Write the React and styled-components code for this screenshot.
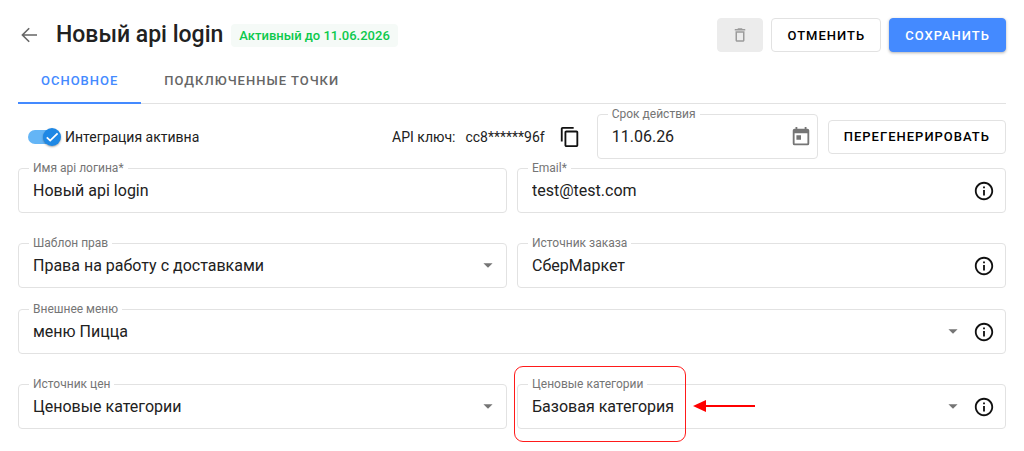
import React, { useState } from 'react'
import styled, { createGlobalStyle, css } from 'styled-components'
import {
  MdDeleteOutline,
  MdOutlineContentCopy,
  MdInfoOutline,
  MdArrowDropDown,
} from 'react-icons/md'

const GlobalStyle = createGlobalStyle`
  * {
    box-sizing: border-box;
  }
  body {
    margin: 0;
    background: #fff;
    color: #212121;
    font-family: Roboto, "Noto Sans", sans-serif;
    font-size: 14px;
  }
  button, input, select {
    font-family: inherit;
    color: inherit;
  }
`;

const Page = styled.div`
  padding: 18px 18px 22px;
`;

const Header = styled.header`
  display: flex;
  align-items: center;
  gap: 8px;
`;

const IconButton = styled.button`
  display: flex;
  flex: none;
  padding: 0;
  border: 0;
  background: none;
  color: ${(p) => p.$color || '#111'};
  cursor: pointer;
`;

const Title = styled.h1`
  margin: 0 0 0 8px;
  font-size: 23px;
  line-height: 28px;
  font-weight: 500;
  white-space: nowrap;
`;

const Status = styled.span`
  padding: 0 8px;
  border-radius: 4px;
  background: #f5faf7;
  color: #0cc94c;
  font-size: 13px;
  font-weight: 500;
  line-height: 23px;
  white-space: nowrap;
`;

const Actions = styled.div`
  display: flex;
  gap: 8px;
  margin-left: auto;
`;

const Button = styled.button`
  display: flex;
  align-items: center;
  justify-content: center;
  flex: none;
  height: 34px;
  padding: 0 15px;
  border: 1px solid #e2e2e2;
  border-radius: 4px;
  background: #fff;
  color: #000;
  font-size: 13px;
  font-weight: 500;
  letter-spacing: 1px;
  text-transform: uppercase;
  white-space: nowrap;
  cursor: pointer;

  ${(p) => p.$primary && css`
    border-color: #448aff;
    background: #448aff;
    color: #fff;
    box-shadow: 0 1px 3px rgba(0, 0, 0, 0.3);
  `}

  &:disabled {
    padding: 0 13px;
    border-color: #ececec;
    background: #ececec;
    color: #9b9b9b;
    cursor: default;
  }
`;

const Tabs = styled.nav`
  display: flex;
  border-bottom: 1px solid #e2e2e2;
`;

const Tab = styled.button`
  height: 52px;
  margin-bottom: -1px;
  padding: 6px 23px 0;
  border: 0;
  border-bottom: 2px solid ${(p) => (p.$active ? '#448aff' : 'transparent')};
  background: none;
  color: ${(p) => (p.$active ? '#448aff' : '#666')};
  font-size: 13px;
  font-weight: 500;
  letter-spacing: 1px;
  text-transform: uppercase;
  cursor: pointer;
`;

const Form = styled.form`
  padding-top: 10px;
`;

const Row = styled.div`
  display: flex;
  align-items: center;
  gap: 10px;
  margin-bottom: ${(p) => p.$space || 0}px;
`;

const SwitchLabel = styled.label`
  display: flex;
  align-items: center;
  gap: 4px;
  margin: 0 auto 0 10px;
  cursor: pointer;
`;

const SwitchTrack = styled.span`
  position: relative;
  display: flex;
  align-items: center;
  width: 33px;
  height: 18px;

  &::before {
    content: '';
    width: 30px;
    height: 14px;
    border-radius: 7px;
    background: ${(p) => (p.$on ? '#64b5f6' : '#bdbdbd')};
  }
`;

const SwitchInput = styled.input`
  position: absolute;
  inset: 0;
  width: 100%;
  height: 100%;
  margin: 0;
  opacity: 0;
  cursor: pointer;
`;

const SwitchThumb = styled.svg`
  position: absolute;
  top: 0;
  ${(p) => (p.$on ? 'right: 0;' : 'left: 0;')}
  border-radius: 50%;
  background: ${(p) => (p.$on ? '#1e88e5' : '#fafafa')};
  box-shadow: 0 1px 2px rgba(0, 0, 0, 0.35);
  pointer-events: none;
`;

const ApiKey = styled.div`
  display: flex;
  align-items: center;
  gap: 10px;
  margin-right: 6px;
  white-space: nowrap;

  button {
    margin-left: 4px;
  }
`;

const FieldBox = styled.div`
  position: relative;
  display: flex;
  align-items: center;
  flex: ${(p) => (p.$width ? `0 0 ${p.$width}px` : '1 1 50%')};
  min-width: 0;
  height: 45px;
  padding-right: ${(p) => p.$end || 10}px;
  border: 1px solid #e2e2e2;
  border-radius: 4px;
`;

// label sits over the top border of the outline
const FieldLabel = styled.label`
  position: absolute;
  top: -8px;
  left: 10px;
  padding: 0 4px;
  background: #fff;
  color: #757575;
  font-size: 12px;
  line-height: 14px;
  white-space: nowrap;
`;

const control = css`
  flex: 1;
  width: 100%;
  min-width: 0;
  height: 43px;
  padding: 0 14px 1px;
  border: 0;
  outline: 0;
  background: none;
  font-size: 16px;
`;

const Input = styled.input`
  ${control}
`;

const SelectWrap = styled.span`
  position: relative;
  display: flex;
  flex: 1;
  min-width: 0;

  svg {
    position: absolute;
    top: 10px;
    right: 0;
    color: #757575;
    pointer-events: none;
  }
`;

const Select = styled.select`
  ${control}
  appearance: none;
  cursor: pointer;
`;

const InfoGap = styled.span`
  width: 9px;
`;

const Highlight = styled.span`
  position: absolute;
  top: -19px;
  left: -4px;
  width: 172px;
  height: 76px;
  border: 1px solid #ff1a1a;
  border-radius: 9px;
  pointer-events: none;
`;

const Arrow = styled.svg`
  position: absolute;
  top: 15px;
  left: 175px;
  pointer-events: none;
`;

const BackIcon = () => (
  <svg width="22" height="22" viewBox="0 0 22 22" fill="none" stroke="currentColor" strokeWidth="1.6">
    <path d="M19 11H5M11.2 4.2 4.4 11l6.8 6.8" />
  </svg>
)

const CalendarIcon = () => (
  <svg width="22" height="22" viewBox="0 0 24 24" fill="currentColor">
    <path d="M19 3h-1V1h-2v2H8V1H6v2H5a2 2 0 0 0-2 2v14a2 2 0 0 0 2 2h14a2 2 0 0 0 2-2V5a2 2 0 0 0-2-2zm0 16H5V8h14v11zM7 10h5v5H7z" />
  </svg>
)

const InfoButton = () => (
  <IconButton type="button" aria-label="Информация">
    <MdInfoOutline size={22} />
  </IconButton>
)

const TextField = ({ id, label, value, info }) => (
  <FieldBox>
    <FieldLabel htmlFor={id}>{label}</FieldLabel>
    <Input id={id} type="text" defaultValue={value} />
    {info && <InfoButton />}
  </FieldBox>
)

const SelectField = ({ id, label, value, info, children }) => (
  <FieldBox $end={info ? 10 : 7}>
    <FieldLabel htmlFor={id}>{label}</FieldLabel>
    <SelectWrap>
      <Select id={id} defaultValue={value}>
        <option>{value}</option>
      </Select>
      <MdArrowDropDown size={22} />
    </SelectWrap>
    {info && (
      <>
        <InfoGap />
        <InfoButton />
      </>
    )}
    {children}
  </FieldBox>
)

const App = () => {
  const [active, setActive] = useState(true)
  const [tab, setTab] = useState('main')

  return (
    <Page>
      <GlobalStyle />
      <Header>
        <IconButton type="button" aria-label="Назад" $color="#666">
          <BackIcon />
        </IconButton>
        <Title>Новый api login</Title>
        <Status>Активный до 11.06.2026</Status>
        <Actions>
          <Button type="button" disabled aria-label="Удалить">
            <MdDeleteOutline size={18} />
          </Button>
          <Button type="button">Отменить</Button>
          <Button type="submit" form="login-form" $primary>Сохранить</Button>
        </Actions>
      </Header>

      <Tabs>
        <Tab type="button" $active={tab === 'main'} onClick={() => setTab('main')}>Основное</Tab>
        <Tab type="button" $active={tab === 'points'} onClick={() => setTab('points')}>Подключенные точки</Tab>
      </Tabs>

      <Form id="login-form" onSubmit={(e) => e.preventDefault()}>
        <Row $space={9}>
          <SwitchLabel>
            <SwitchTrack $on={active}>
              <SwitchInput type="checkbox" checked={active} onChange={() => setActive(!active)} />
              <SwitchThumb $on={active} width="18" height="18" viewBox="0 0 18 18">
                {active && <path d="M3.8 9.4 7.2 12.6 14.6 5.4" fill="none" stroke="#fff" strokeWidth="1.8" />}
              </SwitchThumb>
            </SwitchTrack>
            Интеграция активна
          </SwitchLabel>
          <ApiKey>
            <span>API ключ:</span>
            <span>cc8******96f</span>
            <IconButton type="button" aria-label="Скопировать">
              <MdOutlineContentCopy size={22} />
            </IconButton>
          </ApiKey>
          <FieldBox $width={221} $end={5}>
            <FieldLabel htmlFor="expires">Срок действия</FieldLabel>
            <Input id="expires" type="text" defaultValue="11.06.26" />
            <IconButton type="button" aria-label="Выбрать дату" $color="#757575">
              <CalendarIcon />
            </IconButton>
          </FieldBox>
          <Button type="button">Перегенерировать</Button>
        </Row>

        <Row $space={30}>
          <TextField id="name" label="Имя api логина*" value="Новый api login" />
          <TextField id="email" label="Email*" value="test@test.com" info />
        </Row>
        <Row $space={21}>
          <SelectField id="rights" label="Шаблон прав" value="Права на работу с доставками" />
          <TextField id="source" label="Источник заказа" value="СберМаркет" info />
        </Row>
        <Row $space={30}>
          <SelectField id="menu" label="Внешнее меню" value="меню Пицца" info />
        </Row>
        <Row>
          <SelectField id="prices" label="Источник цен" value="Ценовые категории" />
          <SelectField id="category" label="Ценовые категории" value="Базовая категория" info>
            <Highlight />
            <Arrow width="63" height="12" viewBox="0 0 63 12">
              <path d="M0 6 13 0V12Z" fill="#f00" />
              <path d="M12 6H62" stroke="#f00" strokeWidth="2" />
            </Arrow>
          </SelectField>
        </Row>
      </Form>
    </Page>
  )
}

export default App
